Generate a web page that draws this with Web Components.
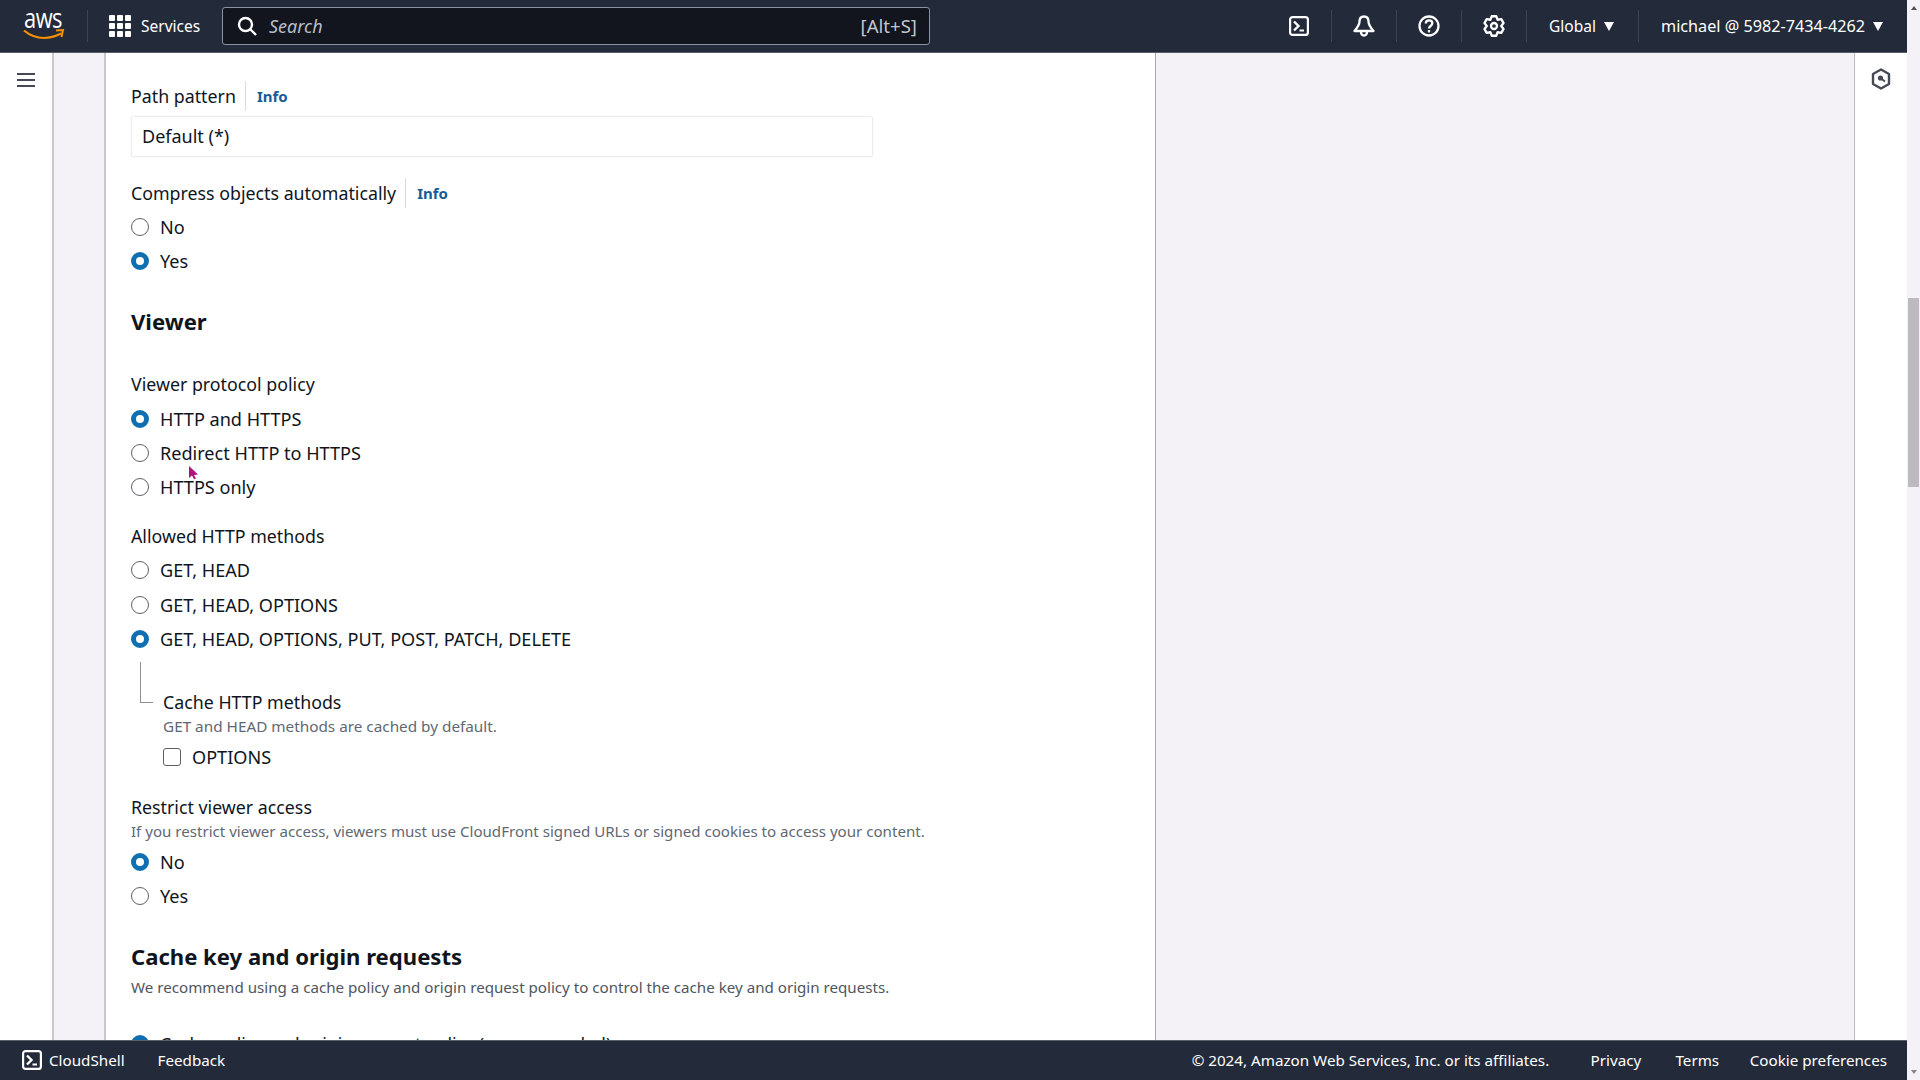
<!DOCTYPE html>
<html lang="en">
<head>
<meta charset="utf-8">
<title>CloudFront behavior</title>
<style>
  html, body { margin: 0; height: 100%; overflow: hidden; }
  body { font-family: "Noto Sans", "Open Sans", sans-serif; color: #0f1b2a; background: #f4f2f7; }
</style>
</head>
<body>
<aws-console>
  <aws-topnav slot="top"></aws-topnav>
  <aws-rail slot="left" kind="menu"></aws-rail>
  <aws-form-card slot="main">
    <aws-field label="Path pattern" info top="31" tight>
      <aws-select>Default (*)</aws-select>
    </aws-field>
    <aws-field label="Compress objects automatically" info top="24">
      <aws-radio>No</aws-radio>
      <aws-radio checked>Yes</aws-radio>
    </aws-field>
    <aws-heading top="27.400">Viewer</aws-heading>
    <aws-field label="Viewer protocol policy" top="36.400">
      <aws-radio checked>HTTP and HTTPS</aws-radio>
      <aws-radio>Redirect HTTP to HTTPS</aws-radio>
      <aws-radio>HTTPS only</aws-radio>
    </aws-field>
    <aws-field label="Allowed HTTP methods" top="20">
      <aws-radio>GET, HEAD</aws-radio>
      <aws-radio>GET, HEAD, OPTIONS</aws-radio>
      <aws-radio checked>GET, HEAD, OPTIONS, PUT, POST, PATCH, DELETE</aws-radio>
    </aws-field>
    <aws-subfield label="Cache HTTP methods" hint="GET and HEAD methods are cached by default.">
      <aws-checkbox>OPTIONS</aws-checkbox>
    </aws-subfield>
    <aws-field label="Restrict viewer access" hint="If you restrict viewer access, viewers must use CloudFront signed URLs or signed cookies to access your content." top="26">
      <aws-radio checked>No</aws-radio>
      <aws-radio>Yes</aws-radio>
    </aws-field>
    <aws-heading top="27.500" hint="We recommend using a cache policy and origin request policy to control the cache key and origin requests.">Cache key and origin requests</aws-heading>
    <aws-field top="28" style="font-size:17.700px">
      <aws-radio checked>Cache policy and origin request policy (recommended)</aws-radio>
    </aws-field>
  </aws-form-card>
  <aws-rail slot="right" kind="tools"></aws-rail>
  <aws-scrollbar slot="scroll"></aws-scrollbar>
  <aws-footer slot="bottom"></aws-footer>
</aws-console>

<script>
  const FONT = `"Noto Sans", "Open Sans", sans-serif`;
  const TERMINAL = `<svg viewBox="0 0 20 20" width="20" height="20" fill="none" stroke="#fff" stroke-width="2.200"><rect x="1.100" y="1.100" width="17.800" height="17.800" rx="2.500"/><path d="M5 5.500l4.500 4.500L5 14.500" stroke-width="2.400"/><path d="M10.500 14.500h4.500" stroke-width="2"/></svg>`;

  function gearPath(R, r, cx, cy) {
    let pts = [];
    for(let k = 0; k < 6; k++) {
      let a = k * 60 - 90;
      [[-30, r], [-13, R], [13, R]].forEach(([d, rad]) => {
        let t = (a + d) * Math.PI / 180;
        pts.push((cx + rad * Math.cos(t)).toFixed(2) + " " + (cy + rad * Math.sin(t)).toFixed(2));
      });
    }
    return "M" + pts.join("L") + "z";
  }

  function define(name, html, init) {
    customElements.define(name, class extends HTMLElement {
      constructor() {
        super();
        this.root = this.attachShadow({mode: "open"});
      }
      connectedCallback() {
        this.root.innerHTML = typeof html === "function" ? html(this) : html;
        if(init) init(this);
      }
    });
  }

  define("aws-console", `
    <style>
      :host { display: grid; height: 1080px; grid-template-columns: 54px 1fr 53px 13px; grid-template-rows: 53px 1fr 40px; }
      ::slotted([slot=top]), ::slotted([slot=bottom]) { grid-column: 1 / 4; }
      .scroll { grid-column: 4; grid-row: 1 / 4; display: grid; }
      .main { overflow: hidden; padding: 0 0 0 50px; min-height: 0; }
    </style>
    <slot name="top"></slot>
    <div class="scroll"><slot name="scroll"></slot></div>
    <slot name="left"></slot>
    <div class="main"><slot name="main"></slot></div>
    <slot name="right"></slot>
    <slot name="bottom"></slot>
    <svg style="position:absolute;left:188px;top:465px" width="11" height="15" viewBox="0 0 11 15"><path d="M1 1l9 8.500-4 .5 2 3.500-2 .8-2-3.800L1 13z" fill="#b0127f"/></svg>
  `);

  define("aws-topnav", `
    <style>
      :host { display: flex; align-items: center; background: #232b3b; color: #fff; height: 53px; font: 16px/22px ${FONT}; box-sizing: border-box; border-bottom: 1px solid #565c68; }
      .logo { width: 87px; position: relative; height: 44px; flex: none; }
      .logo b { position: absolute; left: 24px; top: -2px; font: 400 28px/30px "Open Sans", sans-serif; letter-spacing: -.6px; transform: scaleX(.78); transform-origin: left top; }
      .logo svg { position: absolute; left: 23px; top: 25px; }
      .div { width: 1px; height: 32px; background: #3a4353; flex: none; }
      .services { display: flex; align-items: center; gap: 10px; margin-left: 21px; width: 113px; flex: none; font-size: 15.500px; }
      .search { flex: none; width: 708px; height: 38px; box-sizing: border-box; border: 1px solid #8a93a3; border-radius: 3px; background: #12141e; display: flex; align-items: center; padding: 0 12px 0 14px; color: #d1d5db; }
      .search svg { margin-right: 12px; }
      .search i { flex: 1; color: #b9bec7; font-size: 18px; }
      .search span { color: #c2c6cd; font-size: 18.600px; }
      .icon { width: 64px; display: flex; justify-content: center; flex: none; }
      .spacer { flex: 1; }
      .menu { display: flex; align-items: center; gap: 8px; flex: none; font-size: 15.500px; white-space: nowrap; }
      .caret { width: 0; height: 0; border: 5.500px solid transparent; border-top: 9px solid #fff; border-bottom: 0; }
    </style>
    <div class="logo"><b>aws</b><svg width="42" height="11" viewBox="0 0 42 11" fill="none"><path d="M1 1.500c6 5 13 7.500 20 7.500 6 0 11-1.500 17-4.500" stroke="#f29100" stroke-width="2.200"/><path d="M33 1.500l7-.5-1.500 7" stroke="#f29100" stroke-width="2"/></svg></div>
    <div class="div"></div>
    <div class="services">
      <svg width="22" height="22" viewBox="0 0 22 22" fill="#fff"><rect width="6" height="6" rx="1"/><rect x="8" width="6" height="6" rx="1"/><rect x="16" width="6" height="6" rx="1"/><rect y="8" width="6" height="6" rx="1"/><rect x="8" y="8" width="6" height="6" rx="1"/><rect x="16" y="8" width="6" height="6" rx="1"/><rect y="16" width="6" height="6" rx="1"/><rect x="8" y="16" width="6" height="6" rx="1"/><rect x="16" y="16" width="6" height="6" rx="1"/></svg>
      <span>Services</span>
    </div>
    <div class="search">
      <svg width="20" height="20" viewBox="0 0 20 20" fill="none" stroke="#fff" stroke-width="2.400"><circle cx="8.500" cy="8.500" r="6.500"/><path d="M13 13l6 6"/></svg>
      <i>Search</i><span>[Alt+S]</span>
    </div>
    <div class="spacer"></div>
    <div class="icon">${TERMINAL}</div><div class="div"></div>
    <div class="icon"><svg width="22" height="22" viewBox="0 0 22 22" fill="none" stroke="#fff" stroke-width="2.300" stroke-linejoin="round"><path d="M11 1.500c-2.800 0-4.500 2-4.500 5 0 3.500-2 6-5 9.500h19c-3-3.500-5-6-5-9.500 0-3-1.700-5-4.500-5z"/><path d="M8 16.500c0 2.500 1.300 4 3 4s3-1.500 3-4"/></svg></div><div class="div"></div>
    <div class="icon"><svg width="22" height="22" viewBox="0 0 22 22" fill="none" stroke="#fff" stroke-width="2.300"><circle cx="11" cy="11" r="9.500"/><path d="M7.800 8.500c0-2 1.500-3.200 3.300-3.200s3.200 1.200 3.200 3c0 2.700-3.300 2.700-3.300 5.200"/><path d="M11 15v2.400"/></svg></div><div class="div"></div>
    <div class="icon"><svg width="22" height="22" viewBox="0 0 22 22" fill="none" stroke="#fff" stroke-width="2.300" stroke-linejoin="round"><circle cx="11" cy="11" r="3"/><path d="${gearPath(10, 7.200, 11, 11)}"/></svg></div><div class="div"></div>
    <div class="menu" style="margin-left:22px;width:89px">Global <span class="caret"></span></div>
    <div class="div"></div>
    <div class="menu" style="margin-left:22px;margin-right:24px"><span style="font-size:16.200px">michael @ 5982-7434-4262</span> <span class="caret"></span></div>
  `);

  define("aws-rail", el => el.getAttribute("kind") === "menu" ? `
    <style>
      :host { display: flex; justify-content: center; background: #fff; border-right: 2px solid #c9c7cd; box-sizing: border-box; padding: 19px 0 0; }
      svg { flex: none; }
    </style>
    <svg width="18" height="16" viewBox="0 0 18 16" fill="none" stroke="#444a55" stroke-width="2"><path d="M0 2h18M0 8h18M0 14h18"/></svg>
  ` : `
    <style>
      :host { display: flex; justify-content: center; background: #fff; border-left: 1px solid #bdbbc1; box-sizing: border-box; padding: 15px 0 0; }
      svg { flex: none; }
    </style>
    <svg width="20" height="22" viewBox="0 0 20 22" fill="none" stroke="#454a54" stroke-width="2.400" stroke-linejoin="round"><path d="M10 1.500l8 4.500v10l-8 4.500L2 16V6z"/><circle cx="9.500" cy="10" r="2.600" fill="#454a54" stroke="none"/><path d="M10 10.500l4 3" stroke-width="1.800"/></svg>
  `);

  define("aws-form-card", `
    <style>
      :host { display: block; width: 1052px; background: #fff; box-sizing: border-box; height: 100%; padding: 0 25px; border-left: 2px solid #c9c7cd; border-right: 1px solid #a9a7ad; overflow: hidden; font: 18.100px/24px ${FONT}; }
    </style>
    <slot></slot>
  `);

  define("aws-field", el => {
    let hasHint = el.hasAttribute("hint");
    let gap = el.hasAttribute("tight") ? 0 : hasHint ? 2 : 5;
    return `
    <style>
      :host { display: block; margin-top: ${el.getAttribute("top") || 0}px; }
      .label { display: flex; align-items: center; height: 24px; margin-bottom: ${gap}px; white-space: nowrap; color: #10151d; font-size: 17.800px; }
      .info { margin-left: 9px; padding-left: 11px; border-left: 1px solid #dad9dd; color: #165c96; font-weight: 700; font-size: 15px; line-height: 30px; }
      .hint { color: #5f6873; font-size: 15.100px; line-height: 20px; margin-bottom: 3.500px; }
    </style>
    ${el.hasAttribute("label") ? `<div class="label">${el.getAttribute("label")}${el.hasAttribute("info") ? `<span class="info">Info</span>` : ""}</div>` : ""}
    ${hasHint ? `<div class="hint">${el.getAttribute("hint")}</div>` : ""}
    <slot></slot>
  `;
  });

  define("aws-select", `
    <style>
      :host { display: block; box-sizing: border-box; width: 742px; height: 41px; margin-top: 8px; padding: 7px 10px; border: 1px solid #ececef; border-radius: 2px; box-shadow: 0 0 2px #eee; color: #10151d; font-size: 18px; }
    </style>
    <slot></slot>
  `);

  define("aws-radio", el => `
    <style>
      :host { display: flex; align-items: center; height: 34.300px; white-space: nowrap; color: #10151d; }
      i { width: 18px; height: 18px; border-radius: 50%; box-sizing: border-box; margin-right: 11px; flex: none;
          ${el.hasAttribute("checked") ? "border: 5.500px solid #0f6fb0; background: #fff;" : "border: 1.700px solid #5f6068; background: #fff;"} }
    </style>
    <i></i><slot></slot>
  `);

  define("aws-checkbox", `
    <style>
      :host { display: flex; align-items: center; height: 24px; white-space: nowrap; margin-top: 7px; color: #10151d; }
      i { width: 18px; height: 18px; border: 1.700px solid #5f6068; border-radius: 3px; box-sizing: border-box; margin-right: 11px; flex: none; }
    </style>
    <i></i><slot></slot>
  `);

  define("aws-subfield", el => `
    <style>
      :host { display: block; margin: 6px 0 0 9px; position: relative; padding-left: 23px; }
      .branch { position: absolute; left: 0; top: 0; width: 12px; height: 40px; border-left: 1px solid #8d8d92; border-bottom: 1px solid #8d8d92; }
      .label { padding-top: 28px; height: 24px; color: #10151d; font-size: 17.800px; }
      .hint { color: #5f6873; font-size: 15.300px; line-height: 24px; }
    </style>
    <div class="branch"></div>
    <div class="label">${el.getAttribute("label")}</div>
    <div class="hint">${el.getAttribute("hint")}</div>
    <slot></slot>
  `);

  define("aws-heading", el => `
    <style>
      :host { display: block; margin-top: ${el.getAttribute("top") || 0}px; }
      h2 { margin: 0; font: 700 22.100px/30px ${FONT}; color: #10151d; }
      p { margin: 4px 0 0; font-size: 15.150px; line-height: 24px; color: #4e5661; }
    </style>
    <h2><slot></slot></h2>
    ${el.hasAttribute("hint") ? `<p>${el.getAttribute("hint")}</p>` : ""}
  `);

  define("aws-footer", `
    <style>
      :host { display: flex; align-items: center; background: #232b3b; color: #fff; font: 15.200px/22px ${FONT}; padding: 0 20px 2px 22px; border-top: 1px solid #5a606c; box-sizing: border-box; white-space: nowrap; }
      span.shell { display: flex; align-items: center; gap: 7px; }
      .left { flex: 1; display: flex; gap: 33px; }
      .right { display: flex; gap: 33px; }
      .right span:nth-child(1) { margin-right: 8.400px; }
      .right span:nth-child(2) { margin-right: 1.200px; }
      .right span:nth-child(3) { margin-right: -2.400px; }
    </style>
    <div class="left"><span class="shell">${TERMINAL}CloudShell</span><span>Feedback</span></div>
    <div class="right"><span>© 2024, Amazon Web Services, Inc. or its affiliates.</span><span>Privacy</span><span>Terms</span><span>Cookie preferences</span></div>
  `);

  define("aws-scrollbar", `
    <style>
      :host { display: flex; flex-direction: column; align-items: center; background: #f4f2f7; height: 1080px; }
      .up, .down { width: 0; height: 0; border: 3.500px solid transparent; }
      .up { border-bottom: 4px solid #55525a; border-top: 0; margin-top: 6px; }
      .down { border-top: 4px solid #88858c; border-bottom: 0; margin-bottom: 6px; }
      .thumb { width: 11px; height: 189px; background: #bdb9bf; margin-top: 288px; }
      .gap { flex: 1; }
    </style>
    <div class="up"></div><div class="thumb"></div><div class="gap"></div><div class="down"></div>
  `);
</script>
</body>
</html>
